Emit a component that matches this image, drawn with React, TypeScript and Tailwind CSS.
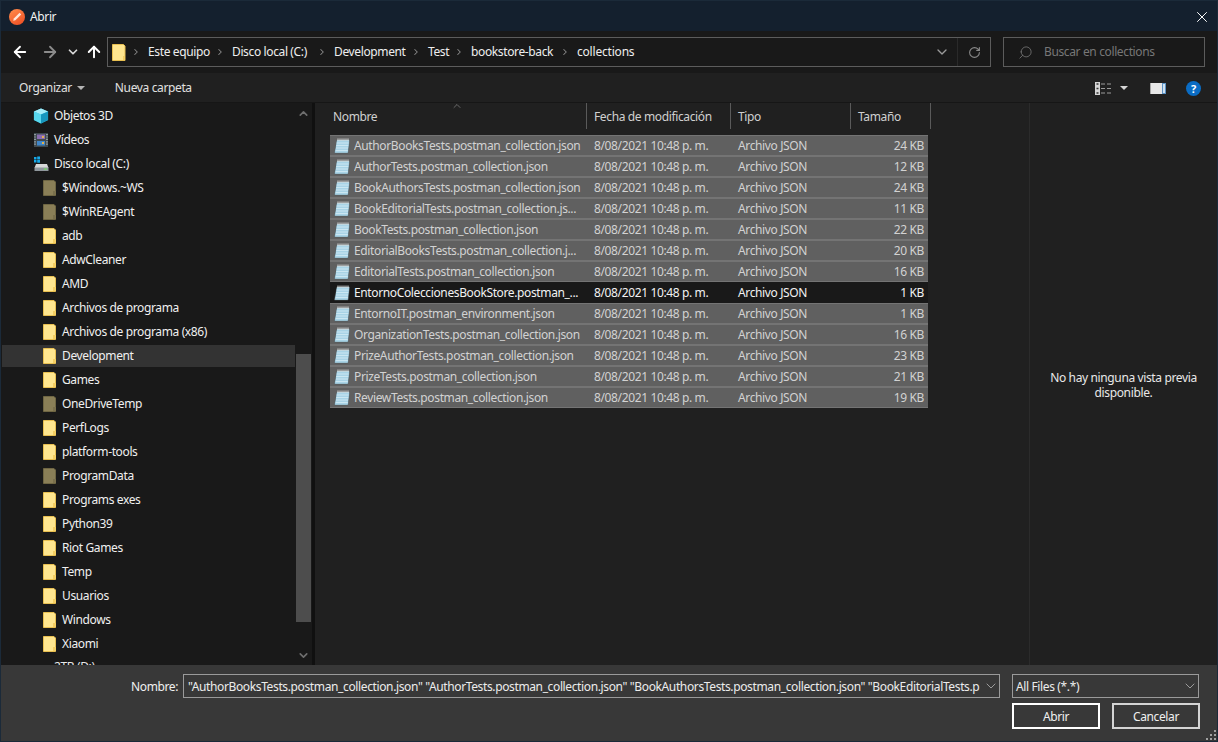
import React from "react";
import { ArrowLeft, ArrowRight, ArrowUp, ChevronDown, ChevronRight, ChevronUp, RotateCw, Search, X } from "lucide-react";

const folders: [string, boolean][] = [
  ["$Windows.~WS", true], ["$WinREAgent", true], ["adb", false], ["AdwCleaner", false], ["AMD", false],
  ["Archivos de programa", false], ["Archivos de programa (x86)", false], ["Development", false], ["Games", false],
  ["OneDriveTemp", true], ["PerfLogs", false], ["platform-tools", false], ["ProgramData", true], ["Programs exes", false],
  ["Python39", false], ["Riot Games", false], ["Temp", false], ["Usuarios", false], ["Windows", false], ["Xiaomi", false],
];

const files: [string, string][] = [
  ["AuthorBooksTests.postman_collection.json", "24 KB"],
  ["AuthorTests.postman_collection.json", "12 KB"],
  ["BookAuthorsTests.postman_collection.json", "24 KB"],
  ["BookEditorialTests.postman_collection.js...", "11 KB"],
  ["BookTests.postman_collection.json", "22 KB"],
  ["EditorialBooksTests.postman_collection.j...", "20 KB"],
  ["EditorialTests.postman_collection.json", "16 KB"],
  ["EntornoColeccionesBookStore.postman_...", "1 KB"],
  ["EntornoIT.postman_environment.json", "1 KB"],
  ["OrganizationTests.postman_collection.json", "16 KB"],
  ["PrizeAuthorTests.postman_collection.json", "23 KB"],
  ["PrizeTests.postman_collection.json", "21 KB"],
  ["ReviewTests.postman_collection.json", "19 KB"],
];

const crumbs: [string, string][] = [
  ["Este equipo", "w-[62px]"],
  ["Disco local (C:)", "w-[80px]"],
  ["Development", "w-[72px]"],
  ["Test", "w-[21px]"],
  ["bookstore-back", "w-[84px]"],
  ["collections", "w-[60px] tracking-[-0.2px]"],
];

function FolderIcon({ dim = false }: { dim?: boolean }) {
  return (
    <svg width="14" height="16" viewBox="0 0 14 16" className="shrink-0">
      <path d="M0.5 0.5H11L12.5 2V15.5H0.5Z" fill={dim ? "#8a7f57" : "#ffe68f"} stroke={dim ? "#6f6643" : "#e8bf50"} />
      <path d="M10 15V11H13V15Z" fill={dim ? "#7a704c" : "#f5cf63"} />
    </svg>
  );
}

function FileIcon() {
  return (
    <svg width="16" height="16" viewBox="0 0 16 16" className="shrink-0">
      <path d="M3 2H15.5L14 15H0.5Z" fill="#a8d3e6" stroke="#4f5a60" strokeWidth="0.6" />
      <path d="M3 2.5H15L13.7 14.5H1.2Z" fill="#a8d3e6" />
      <path d="M2.6 5H14.6M2.3 7.5H14.3M2 10H14M1.7 12.5H13.8" stroke="#d4ecf5" strokeWidth="0.8" />
      <path d="M4 0.5V3M6 0.5V3M8 0.5V3M10 0.5V3M12 0.5V3M14 0.5V3" stroke="#f0f0f0" strokeWidth="0.9" />
    </svg>
  );
}

function Cube() {
  return (
    <svg width="16" height="16" viewBox="0 0 17 17" className="shrink-0">
      <path d="M8.5 0.5L16 3.7V12.8L8.5 16.5L1 12.8V3.7Z" fill="#33c6e6" />
      <path d="M8.5 0.5L16 3.7L8.5 7L1 3.7Z" fill="#a5ecf8" />
      <path d="M8.5 7V16.5L1 12.8V3.7Z" fill="#57d7ee" />
      <path d="M8.5 7V16.5L16 12.8V3.7Z" fill="#1796bd" />
    </svg>
  );
}

function Film() {
  return (
    <svg width="16" height="14" viewBox="0 0 16 14" className="shrink-0">
      <rect x="1" y="0" width="14" height="14" fill="#3f4a50" />
      <path d="M2 1V13M14 1V13" stroke="#c5ccd0" strokeWidth="1.2" strokeDasharray="1.2 1.2" />
      <rect x="4" y="1.5" width="8" height="4.5" fill="#8a6db0" />
      <rect x="4" y="8" width="8" height="4.5" fill="#3f86c9" />
      <rect x="9" y="3" width="2" height="2" fill="#e3b24d" />
      <rect x="9" y="9" width="2" height="2" fill="#e3b24d" />
    </svg>
  );
}

function Disk() {
  return (
    <svg width="16" height="16" viewBox="0 0 16 16" className="shrink-0">
      <path d="M1 1H3.5V3.4H1ZM4.2 0.6H7V3.4H4.2ZM1 4H3.5V6.4H1ZM4.2 4H7V6.8H4.2Z" fill="#16a9e8" />
      <path d="M3 8H14L15.5 12H1.5Z" fill="#d8d8d8" />
      <rect x="1.5" y="11.5" width="14" height="3.5" fill="#8f979c" />
      <rect x="11" y="12.5" width="3" height="1.2" fill="#74e05f" />
    </svg>
  );
}

function SideRow({ icon, text, active, wide }: { icon: React.ReactNode; text: string; active?: boolean; wide?: boolean }) {
  return (
    <div className={`h-[22px] mb-[2px] flex items-center shrink-0 gap-[5px] ${wide ? "pl-[31px]" : "pl-[41px]"} ${active ? "bg-[#333333]" : ""}`}>
      {icon}
      <span className="text-[#f0f0f0] whitespace-nowrap">{text}</span>
    </div>
  );
}

export default function App() {
  return (
    <div className="w-[1218px] h-[742px] flex flex-col overflow-hidden border border-[#1b2a39] bg-[#202020] text-[12px] leading-[16px] tracking-[-0.37px] font-['Noto_Sans',sans-serif] text-[#e8e8e8]">
      {/* Title bar */}
      <div className="h-[30px] shrink-0 bg-[#14202e] flex items-center pl-[8px] pr-[6px] pt-[1px]">
        <svg width="16" height="16" viewBox="0 0 16 16" className="shrink-0">
          <defs>
            <linearGradient id="logo" x1="0.2" y1="0" x2="0.8" y2="1">
              <stop offset="0" stopColor="#ff8a4a" />
              <stop offset="1" stopColor="#ef4f24" />
            </linearGradient>
          </defs>
          <circle cx="8" cy="8" r="8" fill="url(#logo)" />
          <path d="M4.2 11.8L4.8 9.6L10.6 3.8L12.2 5.4L6.4 11.2Z" fill="#ffe6da" />
        </svg>
        <span className="ml-[5px] text-[#f2f2f2]">Abrir</span>
        <div className="flex-1" />
        <X size={18} strokeWidth={1.3} className="text-white" />
      </div>

      {/* Address row */}
      <div className="h-[42px] shrink-0 bg-[#191919] flex items-center pl-[10px] pr-[12px]">
        <ArrowLeft size={18} strokeWidth={2.4} className="text-white" />
        <ArrowRight size={18} strokeWidth={2.4} className="ml-[12px] text-[#8b8b8b]" />
        <ChevronDown size={14} strokeWidth={3} className="ml-[7px] text-[#d8d8d8]" />
        <ArrowUp size={18} strokeWidth={2.6} className="ml-[5px] text-white" />
        <div className="ml-[4px] w-[884px] h-[30px] border border-[#5c5c5c] flex items-center pl-[4px]">
          <svg width="14" height="17" viewBox="0 0 14 17" className="shrink-0">
            <path d="M0.5 0.5H11.5L13 2V16.5H0.5Z" fill="#ffe68f" stroke="#e8bf50" />
            <path d="M11 16V12H13V16Z" fill="#f5cf63" />
          </svg>
          {crumbs.map(([c, w]) => (
            <React.Fragment key={c}>
              <ChevronRight size={10} strokeWidth={2.5} className="ml-[5px] mr-[7px] text-[#8a8a8a] shrink-0" />
              <span className={`text-[#eeeeee] whitespace-nowrap ${w}`}>{c}</span>
            </React.Fragment>
          ))}
          <div className="flex-1" />
          <ChevronDown size={16} strokeWidth={2} className="text-[#9a9a9a]" />
          <div className="w-[33px] h-full ml-[7px] border-l border-[#2a2a2a] flex items-center justify-center">
            <RotateCw size={13} strokeWidth={2} className="text-[#8a8a8a]" />
          </div>
        </div>
        <div className="ml-[12px] w-[202px] h-[30px] border border-[#5c5c5c] flex items-center pl-[14px]">
          <Search size={15} strokeWidth={1.2} className="text-[#7f7f7f] -scale-x-100" />
          <span className="ml-[11px] text-[#777777] whitespace-nowrap">Buscar en collections</span>
        </div>
      </div>

      {/* Toolbar */}
      <div className="h-[30px] shrink-0 bg-[#202020] border-b border-[#161616] flex items-center pl-[18px] pr-[16px] pt-[1px]">
        <span className="text-[#e0e0e0]">Organizar</span>
        <span className="ml-[5px] w-0 h-0 border-x-[4px] border-x-transparent border-t-[4px] border-t-[#b5b5b5]" />
        <span className="ml-[30px] text-[#e0e0e0]">Nueva carpeta</span>
        <div className="flex-1" />
        <svg width="16" height="13" viewBox="0 0 16 13" className="shrink-0">
          <rect x="0" y="0" width="5" height="13" fill="#d5d5d5" />
          <path d="M1.5 2H3.5M1.5 6.5H3.5M1.5 11H3.5" stroke="#333" strokeWidth="1.5" />
          <path d="M6 2H10M12 2H16M6 6.5H10M12 6.5H16M6 11H10M12 11H16" stroke="#9b9b9b" />
        </svg>
        <span className="ml-[9px] w-0 h-0 border-x-[4px] border-x-transparent border-t-[4px] border-t-[#d5d5d5]" />
        <svg width="16" height="11" viewBox="0 0 16 11" className="ml-[22px] shrink-0">
          <rect width="16" height="11" fill="#e8e8e8" />
          <rect x="0" width="1" height="11" fill="#a8a8a8" />
          <rect x="12" y="0" width="4" height="11" fill="#5d93c5" />
          <rect x="13" y="1" width="2" height="9" fill="#cfe2f2" />
        </svg>
        <div className="ml-[20px] w-[15px] h-[15px] rounded-full bg-[#0a6cc4] flex items-center justify-center text-white font-bold text-[11px] leading-none tracking-normal">?</div>
      </div>

      {/* Body */}
      <div className="flex-1 min-h-0 flex">
        {/* Sidebar */}
        <div className="w-[314px] shrink-0 bg-[#191919] flex border-r-[3px] border-[#101010]">
          <div className="w-[293px] ml-px pt-[2px] flex flex-col overflow-hidden">
            <SideRow wide icon={<Cube />} text="Objetos 3D" />
            <SideRow wide icon={<Film />} text="Vídeos" />
            <SideRow wide icon={<Disk />} text="Disco local (C:)" />
            {folders.map(([n, d]) => (
              <SideRow key={n} icon={<FolderIcon dim={d} />} text={n} active={n === "Development"} />
            ))}
            <div className="pl-[52px] mt-[2px] text-[#e8e8e8]">2TB (D:)</div>
          </div>
          <div className="w-[17px] flex flex-col items-center text-[#6e6e6e]">
            <ChevronUp size={13} strokeWidth={3} className="mt-[4px] shrink-0" />
            <div className="mt-[234px] w-[15px] h-[268px] bg-[#4d4d4d] shrink-0" />
            <div className="flex-1" />
            <ChevronDown size={13} strokeWidth={3} className="mb-[3px] shrink-0" />
          </div>
        </div>

        {/* List */}
        <div className="flex-1 min-w-0 flex bg-[#202020]">
          <div className="w-[715px] shrink-0 border-r border-[#2b2b2b] flex flex-col">
            <div className="h-[26px] flex relative text-[#d0d0d0]">
              <ChevronUp size={12} strokeWidth={1.2} className="absolute left-[136px] -top-[3px] text-[#9a9a9a]" />
              <div className="w-[272px] pl-[18px] pt-[6px] border-r border-[#5a5a5a]">Nombre</div>
              <div className="w-[144px] pl-[7px] pt-[6px] border-r border-[#5a5a5a] whitespace-nowrap">Fecha de modificación</div>
              <div className="w-[120px] pl-[7px] pt-[6px] border-r border-[#5a5a5a]">Tipo</div>
              <div className="w-[80px] pl-[7px] pt-[6px] border-r border-[#5a5a5a]">Tamaño</div>
            </div>
            <div className="ml-[15px] mt-[6px] w-[598px] flex flex-col">
              {files.map(([n, s], i) => {
                const focus = i === 7;
                return (
                  <div key={n} className={`h-[21px] flex items-center border-y ${focus ? "bg-[#191919] border-[#191919] text-[#f2f2f2]" : "bg-[#606060] border-[#747474] text-[#d2d2d2]"}`}>
                    <div className="w-[24px] pl-[4px]"><FileIcon /></div>
                    <div className="w-[240px] whitespace-nowrap overflow-hidden">{n}</div>
                    <div className="w-[144px] whitespace-nowrap">8/08/2021 10:48 p. m.</div>
                    <div className="w-[100px] whitespace-nowrap">Archivo JSON</div>
                    <div className="w-[86px] text-right">{s}</div>
                  </div>
                );
              })}
            </div>
          </div>
          <div className="flex-1 flex items-start justify-center pt-[267px] text-center text-[#e8e8e8]">
            <div className="w-[170px] leading-[15px]">No hay ninguna vista previa disponible.</div>
          </div>
        </div>
      </div>

      {/* Footer */}
      <div className="h-[76px] shrink-0 bg-[#383838] pt-[9px] relative">
        <div className="flex items-center pl-[130px] pr-[18px]">
          <span className="w-[47px] pt-[1px] text-[#f0f0f0]">Nombre:</span>
          <div className="ml-[5px] w-[817px] h-[24px] border border-[#9a9a9a] flex items-center pl-[4px] text-[#ececec]">
            <span className="flex-1 pt-[1px] overflow-hidden whitespace-nowrap">"AuthorBooksTests.postman_collection.json" "AuthorTests.postman_collection.json" "BookAuthorsTests.postman_collection.json" "BookEditorialTests.p</span>
            <ChevronDown size={16} strokeWidth={1.2} className="ml-[2px] text-[#b5b5b5] shrink-0" />
          </div>
          <div className="ml-[12px] w-[187px] h-[24px] border border-[#9a9a9a] flex items-center pl-[3px] text-[#ececec]">
            <span className="flex-1 pt-[1px]">All Files (*.*)</span>
            <ChevronDown size={16} strokeWidth={1.2} className="text-[#b5b5b5] shrink-0" />
          </div>
        </div>
        <div className="flex justify-end pr-[17px] mt-[5px] gap-[12px]">
          <div className="w-[88px] h-[26px] border-2 border-white flex items-center justify-center pt-[1px] text-[#f0f0f0]">Abrir</div>
          <div className="w-[88px] h-[26px] border-2 border-[#d4d4d4] flex items-center justify-center pt-[1px] text-[#f0f0f0]">Cancelar</div>
        </div>
        <svg width="10" height="10" viewBox="0 0 10 10" className="absolute right-[1px] bottom-[1px]">
          <path d="M8 0H10V2H8ZM4 4H6V6H4ZM8 4H10V6H8ZM0 8H2V10H0ZM4 8H6V10H4ZM8 8H10V10H8Z" fill="#a0a0a0" />
        </svg>
      </div>
    </div>
  );
}
